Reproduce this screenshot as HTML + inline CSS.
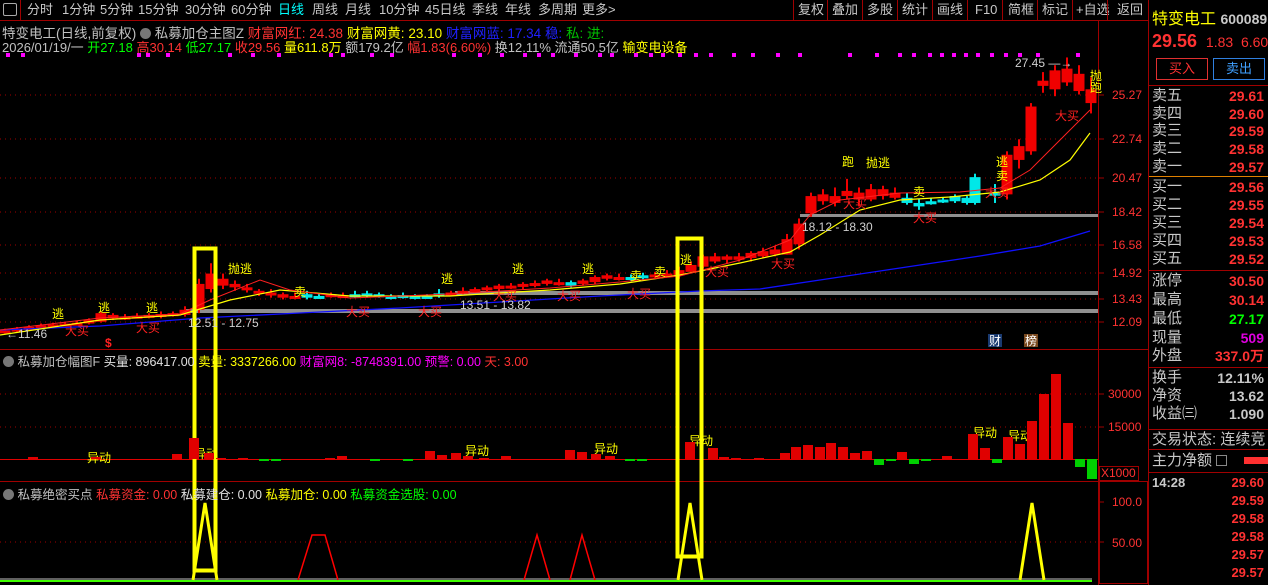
<!DOCTYPE html>
<html><head><meta charset="utf-8">
<style>
*{margin:0;padding:0;box-sizing:border-box}
body{width:1268px;height:585px;background:#000;overflow:hidden;position:relative;font-family:"Liberation Sans","Noto Sans CJK SC",sans-serif;font-size:12px;color:#c0c0c0}
.a{position:absolute;white-space:nowrap}
.tb{position:absolute;top:0;height:21px;line-height:20px;font-size:13px;color:#c8c8c8}
.r{color:#ff3232}.y{color:#ffff00}.b{color:#2020ff}.g{color:#00c000}.m{color:#ff00ff}.w{color:#e0e0e0}.gr{color:#00ff00}
.rp{position:absolute;left:1152px;font-size:15px;color:#c8c8c8;line-height:18px}
.rv{position:absolute;right:4px;font-size:14px;font-weight:bold;color:#ff3232;line-height:18px}
.ax{position:absolute;left:1108px;color:#ff3232;font-size:12px}
</style></head><body>
<div class="a" style="left:0;top:20px;width:1148px;height:1px;background:#a00000"></div>
<div class="a" style="left:3px;top:3px;width:14px;height:13px;border:1px solid #aaa;border-radius:2px"></div>
<div class="a" style="left:20px;top:0;width:1px;height:20px;background:#a00000"></div>
<div class="tb" style="left:27px">分时</div><div class="tb" style="left:62px">1分钟</div><div class="tb" style="left:100px">5分钟</div><div class="tb" style="left:138px">15分钟</div><div class="tb" style="left:185px">30分钟</div><div class="tb" style="left:231px">60分钟</div><div class="tb" style="left:278px;color:#00ffff">日线</div><div class="tb" style="left:312px">周线</div><div class="tb" style="left:345px">月线</div><div class="tb" style="left:379px">10分钟</div><div class="tb" style="left:425px">45日线</div><div class="tb" style="left:472px">季线</div><div class="tb" style="left:505px">年线</div><div class="tb" style="left:538px">多周期</div><div class="tb" style="left:582px">更多&gt;</div>
<div class="tb" style="left:798px">复权</div><div class="tb" style="left:832px">叠加</div><div class="tb" style="left:867px">多股</div><div class="tb" style="left:902px">统计</div><div class="tb" style="left:937px">画线</div><div class="tb" style="left:975px">F10</div><div class="tb" style="left:1008px">简框</div><div class="tb" style="left:1042px">标记</div><div class="tb" style="left:1076px">+自选</div><div class="tb" style="left:1117px">返回</div>
<svg class="a" style="left:0;top:0" width="1150" height="21"><g stroke="#a00000"><line x1="793.5" y1="0" x2="793.5" y2="20"/><line x1="827.5" y1="0" x2="827.5" y2="20"/><line x1="862.5" y1="0" x2="862.5" y2="20"/><line x1="897.5" y1="0" x2="897.5" y2="20"/><line x1="932.5" y1="0" x2="932.5" y2="20"/><line x1="967.5" y1="0" x2="967.5" y2="20"/><line x1="1002.5" y1="0" x2="1002.5" y2="20"/><line x1="1037.5" y1="0" x2="1037.5" y2="20"/><line x1="1072.5" y1="0" x2="1072.5" y2="20"/><line x1="1107.5" y1="0" x2="1107.5" y2="20"/></g></svg>
<div class="a" style="left:2px;top:22px;font-size:13.5px">特变电工(日线,前复权) <span style="display:inline-block;width:11px;height:11px;border-radius:6px;background:#777;vertical-align:-1px"></span> 私募加仓主图Z <span class="r">财富网红: 24.38</span> <span class="y">财富网黄: 23.10</span> <span class="b">财富网蓝: 17.34</span> <span class="b">稳:</span> <span class="g">私:</span> <span class="g">进:</span></div>
<div class="a" style="left:2px;top:37px;font-size:13px">2026/01/19/一 <span class="gr">开27.18</span> <span class="r">高30.14</span> <span class="gr">低27.17</span> <span class="r">收29.56</span> <span class="y">量</span><span class="y">611.8万</span> 额179.2亿 <span class="r">幅1.83(6.60%)</span> 换12.11% 流通50.5亿 <span class="y">输变电设备</span></div>
<svg id="c" class="a" style="left:0;top:0" width="1150" height="585">
<g stroke="#a00000" fill="none">
<line x1="0" y1="349.5" x2="1148" y2="349.5"/><line x1="0" y1="481.5" x2="1148" y2="481.5"/>
<line x1="1098.5" y1="21" x2="1098.5" y2="585"/><line x1="1148.5" y1="0" x2="1148.5" y2="585"/>
<rect x="1099.5" y="466.5" width="39" height="14"/>
<rect x="1099.5" y="481.5" width="48" height="102"/>
</g>
<g stroke="#a00000" stroke-dasharray="1,4">
<line x1="0" y1="95" x2="1098" y2="95"/><line x1="0" y1="139" x2="1098" y2="139"/><line x1="0" y1="178" x2="1098" y2="178"/><line x1="0" y1="212" x2="1098" y2="212"/><line x1="0" y1="245" x2="1098" y2="245"/><line x1="0" y1="273" x2="1098" y2="273"/><line x1="0" y1="299" x2="1098" y2="299"/><line x1="0" y1="322" x2="1098" y2="322"/>
<line x1="0" y1="394" x2="1098" y2="394"/><line x1="0" y1="427" x2="1098" y2="427"/>
<line x1="0" y1="542" x2="1098" y2="542"/>
</g>
<g stroke="#a00000"><line x1="1098" y1="95" x2="1104" y2="95"/><line x1="1098" y1="139" x2="1104" y2="139"/><line x1="1098" y1="178" x2="1104" y2="178"/><line x1="1098" y1="212" x2="1104" y2="212"/><line x1="1098" y1="245" x2="1104" y2="245"/><line x1="1098" y1="273" x2="1104" y2="273"/><line x1="1098" y1="299" x2="1104" y2="299"/><line x1="1098" y1="322" x2="1104" y2="322"/><line x1="1098" y1="394" x2="1104" y2="394"/><line x1="1098" y1="427" x2="1104" y2="427"/><line x1="1098" y1="502" x2="1104" y2="502"/><line x1="1098" y1="542" x2="1104" y2="542"/></g>
<line x1="0" y1="459.5" x2="1098" y2="459.5" stroke="#e00000"/>
<rect x="186" y="309" width="912" height="4" fill="#909090"/>
<rect x="455" y="291" width="643" height="4" fill="#909090"/>
<rect x="800" y="214" width="298" height="3" fill="#909090"/>
<g id="cd"></g>
<polyline fill="none" stroke="#1010ff" stroke-width="1.3" points="0,330 100,326 200,318 300,313 400,308 500,302 600,296 700,291 760,289 820,280 900,268 980,256 1040,246 1090,231"/>
<polyline fill="none" stroke="#ffff00" stroke-width="1.2" points="0,335 100,320 180,315 230,300 280,290 350,296 450,296 550,290 620,284 680,275 740,263 790,252 820,235 860,210 900,200 950,197 1000,192 1040,180 1070,160 1090,133"/>
<polyline fill="none" stroke="#ff2020" stroke-width="1" points="0,330 100,318 180,314 210,300 260,280 290,290 350,298 450,294 550,288 620,282 680,276 740,260 790,240 810,215 840,200 900,193 960,192 1000,188 1030,170 1060,140 1090,110"/>
<rect x="194.5" y="248.5" width="21" height="322" fill="none" stroke="#ffff00" stroke-width="4"/>
<rect x="677.5" y="238.5" width="24" height="318" fill="none" stroke="#ffff00" stroke-width="4"/>
<line x1="0" y1="581" x2="1092" y2="581" stroke="#40ff00" stroke-width="2"/>
<line x1="0" y1="579" x2="1092" y2="579" stroke="#ffffff" stroke-width="0.8"/>
<g fill="none" stroke="#ffff00" stroke-width="3"><polyline points="193,580 205,503 217,580"/><polyline points="678,580 690,503 702,580"/><polyline points="1020,580 1032,503 1044,580"/></g>
<g fill="none" stroke="#ff0000" stroke-width="1.5"><polyline points="298,580 312,535 325,535 338,580"/><polyline points="524,580 537,535 550,580"/><polyline points="570,580 582,535 595,580"/></g>
<g fill="#ff00ff" id="md"></g>
<g font-size="12" font-family="Liberation Sans,Noto Sans CJK SC,sans-serif">
<g fill="#ffff00"><text x="52" y="318">逃</text><text x="98" y="312">逃</text><text x="146" y="312">逃</text><text x="228" y="273">抛逃</text><text x="441" y="283">逃</text><text x="512" y="273">逃</text><text x="582" y="273">逃</text><text x="680" y="264">逃</text><text x="842" y="166">跑</text><text x="866" y="167">抛逃</text><text x="996" y="166">逃</text><text x="1090" y="80">抛</text><text x="1090" y="92">跑</text><text x="294" y="296">卖</text><text x="630" y="280">卖</text><text x="654" y="276">卖</text><text x="913" y="196">卖</text><text x="996" y="180">卖</text>
<text x="87" y="462">异动</text><text x="194" y="458">异动</text><text x="465" y="455">异动</text><text x="594" y="453">异动</text><text x="689" y="445">异动</text><text x="973" y="437">异动</text><text x="1008" y="440">异动</text></g>
<g fill="#ff2020"><text x="65" y="335">大买</text><text x="136" y="332">大买</text><text x="346" y="316">大买</text><text x="418" y="316">大买</text><text x="493" y="300">大买</text><text x="557" y="300">大买</text><text x="627" y="298">大买</text><text x="705" y="276">大买</text><text x="771" y="268">大买</text><text x="843" y="208">大买</text><text x="913" y="222">大买</text><text x="985" y="197">大买</text><text x="1055" y="120">大买</text><text x="105" y="347" font-weight="bold">$</text></g>
<g fill="#d0d0d0"><text x="6" y="338">←11.46</text><text x="188" y="327">12.51 - 12.75</text><text x="460" y="309">13.51 - 13.82</text><text x="802" y="231">18.12 - 18.30</text><text x="1015" y="67">27.45 —→</text></g>
</g>
<rect x="988" y="334" width="14" height="13" fill="#1a3a70"/><text x="989" y="345" font-size="12" fill="#fff" font-family="Noto Sans CJK SC">财</text>
<rect x="1024" y="334" width="14" height="13" fill="#7a4a20"/><text x="1025" y="345" font-size="12" fill="#fff" font-family="Noto Sans CJK SC">榜</text>
<g id="vb"></g>
</svg>
<div class="ax" style="top:88px;left:1112px">25.27</div><div class="ax" style="top:132px;left:1112px">22.74</div><div class="ax" style="top:171px;left:1112px">20.47</div><div class="ax" style="top:205px;left:1112px">18.42</div><div class="ax" style="top:238px;left:1112px">16.58</div><div class="ax" style="top:266px;left:1112px">14.92</div><div class="ax" style="top:292px;left:1112px">13.43</div><div class="ax" style="top:315px;left:1112px">12.09</div>
<div class="ax" style="top:387px">30000</div><div class="ax" style="top:420px">15000</div><div class="ax" style="top:466px;left:1101px">X1000</div>
<div class="ax" style="top:495px;left:1112px">100.0</div><div class="ax" style="top:536px;left:1112px">50.00</div>
<div class="a" style="left:3px;top:351px;font-size:12.5px"><span style="display:inline-block;width:11px;height:11px;border-radius:6px;background:#777;vertical-align:-1px"></span> 私募加仓幅图F <span class="w">买量: 896417.00</span> <span class="y">卖量: 3337266.00</span> <span class="m">财富网8: -8748391.00</span> <span class="m">预警: 0.00</span> <span class="r">天: 3.00</span></div>
<div class="a" style="left:3px;top:484px;font-size:12.5px"><span style="display:inline-block;width:11px;height:11px;border-radius:6px;background:#777;vertical-align:-1px"></span> 私募绝密买点 <span class="r">私募资金: 0.00</span> <span class="w">私募建仓: 0.00</span> <span class="y">私募加仓: 0.00</span> <span class="gr">私募资金选股: 0.00</span></div>
<div class="a" style="left:1152px;top:5px;font-size:16px;color:#ffff00">特变电工 <span style="color:#c8c8c8;font-size:14px;font-weight:bold">600089</span></div>
<div class="a" style="left:1152px;top:31px;font-size:18px;font-weight:bold;color:#ff3232">29.56 <span style="font-size:14px;font-weight:normal">&nbsp;1.83&nbsp; 6.60</span></div>
<div class="a" style="left:1156px;top:58px;width:52px;height:22px;border:1px solid #e03030;color:#ff3232;text-align:center;line-height:20px;font-size:13px">买入</div>
<div class="a" style="left:1213px;top:58px;width:52px;height:22px;border:1px solid #3080e0;color:#40a0ff;text-align:center;line-height:20px;font-size:13px">卖出</div>
<div class="a" style="left:1149px;top:85px;width:119px;height:1px;background:#a00000"></div>
<div class="a" style="left:1149px;top:176px;width:119px;height:1px;background:#e08000"></div>
<div class="a" style="left:1149px;top:270px;width:119px;height:1px;background:#a00000"></div>
<div class="a" style="left:1149px;top:367px;width:119px;height:1px;background:#a00000"></div>
<div class="a" style="left:1149px;top:429px;width:119px;height:1px;background:#a00000"></div>
<div class="a" style="left:1149px;top:449px;width:119px;height:1px;background:#a00000"></div>
<div class="a" style="left:1149px;top:472px;width:119px;height:1px;background:#a00000"></div>
<div class="rp" style="top:87px">卖五</div><div class="rv" style="top:87px">29.61</div>
<div class="rp" style="top:105px">卖四</div><div class="rv" style="top:105px">29.60</div>
<div class="rp" style="top:122px">卖三</div><div class="rv" style="top:122px">29.59</div>
<div class="rp" style="top:140px">卖二</div><div class="rv" style="top:140px">29.58</div>
<div class="rp" style="top:158px">卖一</div><div class="rv" style="top:158px">29.57</div>
<div class="rp" style="top:178px">买一</div><div class="rv" style="top:178px">29.56</div>
<div class="rp" style="top:196px">买二</div><div class="rv" style="top:196px">29.55</div>
<div class="rp" style="top:214px">买三</div><div class="rv" style="top:214px">29.54</div>
<div class="rp" style="top:232px">买四</div><div class="rv" style="top:232px">29.53</div>
<div class="rp" style="top:250px">买五</div><div class="rv" style="top:250px">29.52</div>
<div class="rp" style="top:272px">涨停</div><div class="rv" style="top:272px">30.50</div>
<div class="rp" style="top:291px">最高</div><div class="rv" style="top:291px">30.14</div>
<div class="rp" style="top:310px">最低</div><div class="rv" style="top:310px;color:#00ff00">27.17</div>
<div class="rp" style="top:329px">现量</div><div class="rv" style="top:329px;color:#e000e0">509</div>
<div class="rp" style="top:347px">外盘</div><div class="rv" style="top:347px">337.0万</div>
<div class="rp" style="top:369px">换手</div><div class="rv" style="top:369px;color:#c8c8c8">12.11%</div>
<div class="rp" style="top:387px">净资</div><div class="rv" style="top:387px;color:#c8c8c8">13.62</div>
<div class="rp" style="top:405px">收益㈢</div><div class="rv" style="top:405px;color:#c8c8c8">1.090</div>
<div class="rp" style="top:431px">交易状态: 连续竞</div>
<div class="rp" style="top:452px">主力净额 <span style="display:inline-block;width:11px;height:11px;border:1px solid #888;vertical-align:-1px"></span></div>
<div class="a" style="left:1244px;top:457px;width:24px;height:7px;background:#ff3030"></div>
<div class="a" style="left:1152px;top:475px;font-size:13px;font-weight:bold;color:#c8c8c8">14:28</div>
<div class="rv" style="top:474px;font-size:13px">29.60</div><div class="rv" style="top:492px;font-size:13px">29.59</div><div class="rv" style="top:510px;font-size:13px">29.58</div><div class="rv" style="top:528px;font-size:13px">29.58</div><div class="rv" style="top:546px;font-size:13px">29.57</div><div class="rv" style="top:564px;font-size:13px">29.57</div>
<script>
var NS="http://www.w3.org/2000/svg";
function P(p){return 95+(25.27-p)*17.22;}
function el(g,n,a){var e=document.createElementNS(NS,n);for(var k in a)e.setAttribute(k,a[k]);g.appendChild(e);}
var cd=document.getElementById('cd');
var K=[[5,11.5,11.6,11.7,11.4],[17,11.55,11.7,11.8,11.5],[29,11.65,11.8,11.9,11.6],[41,11.75,11.9,12.0,11.7],[53,11.85,11.95,12.05,11.8],[65,11.9,12.0,12.1,11.85],[77,11.95,12.05,12.15,11.9],[89,12.0,12.2,12.3,11.95],[101,12.1,12.6,12.7,12.05],[113,12.3,12.5,12.6,12.2],[125,12.3,12.4,12.55,12.2],[137,12.35,12.45,12.6,12.3],[149,12.4,12.5,12.6,12.3],[161,12.4,12.55,12.7,12.3],[173,12.45,12.6,12.7,12.4],[185,12.5,12.8,13.0,12.4],[199,12.8,14.3,14.6,12.6],[211,14.0,14.9,15.5,13.8],[223,14.6,14.2,14.9,14.0],[235,14.3,14.1,14.5,13.9],[247,14.1,14.0,14.3,13.8],[259,13.9,13.8,14.0,13.6],[271,13.8,13.7,14.0,13.5],[283,13.7,13.5,13.8,13.4],[295,13.6,13.6,13.8,13.4],[307,13.5,13.7,13.9,13.4,1],[319,13.6,13.6,13.75,13.5,1],[331,13.6,13.7,13.8,13.5],[343,13.65,13.6,13.8,13.5],[355,13.6,13.7,13.9,13.5,1],[367,13.65,13.75,13.9,13.5,1],[379,13.7,13.6,13.8,13.5,1],[391,13.6,13.55,13.7,13.4,1],[403,13.55,13.65,13.8,13.45,1],[415,13.6,13.5,13.7,13.4,1],[427,13.55,13.6,13.7,13.45,1],[439,13.6,13.75,14.0,13.5,1],[451,13.7,13.8,13.9,13.6],[463,13.8,13.9,14.1,13.7],[475,13.85,14.0,14.1,13.8],[487,13.95,14.1,14.2,13.85],[499,14.0,14.2,14.3,13.9],[511,14.1,14.2,14.35,14.0],[523,14.15,14.3,14.4,14.0],[535,14.2,14.35,14.5,14.1],[547,14.3,14.5,14.6,14.2],[559,14.4,14.3,14.6,14.2],[571,14.4,14.2,14.5,14.1,1],[583,14.3,14.5,14.6,14.2],[595,14.4,14.7,14.8,14.3],[607,14.6,14.8,14.9,14.5],[619,14.7,14.6,14.9,14.5],[631,14.6,14.7,14.85,14.5,1],[643,14.65,14.8,14.95,14.55,1],[655,14.7,14.85,15.0,14.6],[667,14.8,14.9,15.1,14.7],[679,14.8,15.1,15.3,14.6],[691,15.0,15.4,15.6,14.9],[703,15.3,15.9,16.0,15.2],[715,15.6,15.9,16.1,15.5],[727,15.7,15.9,16.0,15.5],[739,15.7,15.9,16.1,15.6],[751,15.8,16.1,16.2,15.6],[763,15.9,16.2,16.4,15.8],[775,16.0,16.3,16.5,15.9],[787,16.0,16.9,17.2,16.0],[799,16.6,17.8,18.1,16.3],[811,18.4,19.4,19.6,18.2],[823,19.1,19.5,19.8,18.9],[835,19.4,19.0,19.9,18.8],[847,19.4,19.7,20.4,19.2],[859,19.6,19.2,19.9,18.8],[871,19.8,19.2,20.1,19.1],[883,19.8,19.4,20.0,19.2],[895,19.6,19.3,19.9,19.2],[907,19.3,19.0,19.6,18.9,1],[919,19.0,18.8,19.2,18.6,1],[931,19.0,19.1,19.3,18.9,1],[943,19.1,19.2,19.3,19.0,1],[955,19.1,19.4,19.5,19.0,1],[967,19.0,19.3,19.4,18.9,1],[975,19.0,20.5,20.7,18.9,1],[995,19.5,19.6,20.1,19.0,1],[1007,19.5,21.8,22.0,19.2],[1019,21.5,22.3,22.7,21.0],[1031,22.0,24.6,24.8,21.8],[1043,25.8,26.1,26.6,25.4],[1055,25.6,26.7,27.0,25.2],[1067,26.0,26.8,27.45,25.8],[1079,25.5,26.5,27.0,25.3],[1091,24.8,25.6,26.3,24.2]];
K.forEach(function(k){var c=k[5]?'#00e8e8':'#f00000';var x=k[0];var w=11;
el(cd,'line',{x1:x,x2:x,y1:P(k[3]),y2:P(k[4]),stroke:c,'stroke-width':2});
var t=Math.min(P(k[1]),P(k[2])),h=Math.max(3,Math.abs(P(k[1])-P(k[2])));
el(cd,'rect',{x:x-w/2,y:t,width:w,height:h,fill:c});});
var vb=document.getElementById('vb');
var V=[[33,457],[96,457],[177,454],[194,438],[209,453],[221,458],[243,458],[264,461],[276,461],[330,458],[342,456],[375,461],[408,461],[430,451],[442,455],[456,453],[468,456],[484,458],[506,456],[570,450],[582,452],[596,454],[610,456],[630,461],[642,461],[690,442],[713,448],[724,457],[736,458],[759,458],[785,453],[796,447],[808,445],[820,447],[831,443],[843,447],[855,453],[867,451],[879,465],[891,461],[902,452],[914,464],[926,461],[947,456],[973,434],[985,448],[997,463],[1008,437],[1020,444],[1032,421],[1044,394],[1056,374],[1068,423],[1080,467],[1092,479]];
V.forEach(function(v){var up=v[1]<459;el(vb,'rect',{x:v[0]-5,y:up?v[1]:459,width:10,height:Math.abs(v[1]-459)||1,fill:up?'#e00000':'#00d000'});});
var md=document.getElementById('md');
[8,23,139,148,168,230,253,279,331,343,372,392,454,480,502,525,539,553,576,600,612,636,651,663,680,696,711,734,753,778,800,850,877,900,914,930,942,954,966,978,992,1006,1020,1038,1078].forEach(function(x){el(md,'rect',{x:x-2,y:53,width:4,height:4});});
</script>
</body></html>
